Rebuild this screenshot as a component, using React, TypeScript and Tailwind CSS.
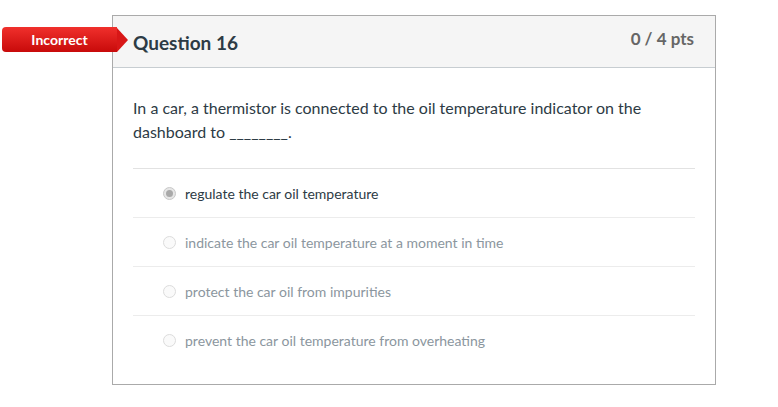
import React from 'react'

const answers = [
  { text: 'regulate the car oil temperature', selected: true },
  { text: 'indicate the car oil temperature at a moment in time', selected: false },
  { text: 'protect the car oil from impurities', selected: false },
  { text: 'prevent the car oil temperature from overheating', selected: false },
]

function Radio({ checked }: { checked: boolean }) {
  if (checked) {
    return (
      <span className="flex h-[13px] w-[13px] items-center justify-center rounded-full border border-[#c8c8c8] bg-[#e6e6e6]">
        <span className="h-[7px] w-[7px] rounded-full bg-[#a9a9a9]" />
      </span>
    )
  }
  return <span className="h-[13px] w-[13px] rounded-full border border-[#dcdcdc] bg-[#fafafa]" />
}

export default function App() {
  return (
    <div className="relative min-h-[407px] bg-white font-['Lato','Open_Sans',sans-serif] text-[#2d3b45]">
      <div className="absolute left-[2px] top-[27px] flex h-[25px] items-center">
        <div className="flex h-[25px] w-[115px] items-center justify-center rounded-l-[4px] bg-[linear-gradient(180deg,#f0302c,#c80a0a)] text-[14px] font-bold text-white">
          Incorrect
        </div>
        <div className="h-0 w-0 border-y-[12.5px] border-l-[11px] border-y-transparent border-l-[#d81717]" />
      </div>

      <div className="pl-[112px] pt-[15px]">
        <div className="w-[604px] border border-[#aaaaaa]">
          <div className="flex h-[52px] items-start justify-between border-b border-[#c7cdd1] bg-[#f5f5f5] pl-[20px] pr-[21px]">
            <h2 className="pt-[16px] text-[19px] font-bold leading-[22px] text-[#2d3b45]">Question 16</h2>
            <span className="pt-[13px] text-[17px] font-bold leading-[20px] text-[#666]">0 / 4 pts</span>
          </div>

          <div className="px-[20px] pb-[19px] pt-[28px]">
            <p className="text-[16px] leading-[24px] text-[#2d3b45]">
              In a car, a thermistor is connected to the oil temperature indicator on the
              <br />
              dashboard to ________.
            </p>

            <div className="mt-[24px] border-t border-[#e2e2e2]">
              {answers.map((a, i) => (
                <div
                  key={a.text}
                  className={`flex h-[49px] items-center gap-[9px] pl-[30px] ${i < answers.length - 1 ? 'border-b border-[#ececec]' : ''}`}
                >
                  <Radio checked={a.selected} />
                  <span className={`text-[14px] ${a.selected ? 'text-[#2d3b45]' : 'text-[#8b969e]'}`}>{a.text}</span>
                </div>
              ))}
            </div>
          </div>
        </div>
      </div>
    </div>
  )
}
